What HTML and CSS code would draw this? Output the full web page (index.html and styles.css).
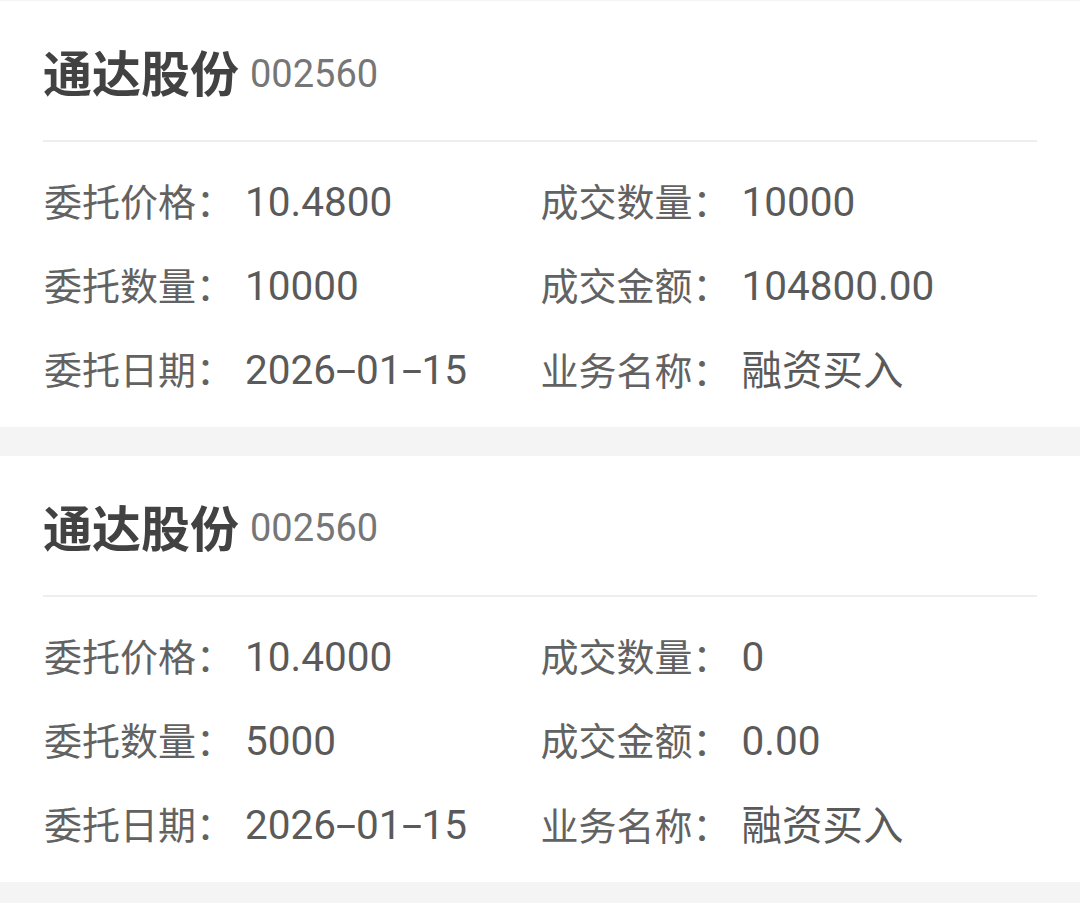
FILE: index.html
```html
<!DOCTYPE html>
<html lang="zh-CN">
<head>
<meta charset="utf-8">
<title>委托列表</title>
<link rel="stylesheet" href="styles.css">
</head>
<body>
<div class="list">
  <section class="card">
    <div class="card-head">
      <span class="name">通达股份</span>
      <span class="code">002560</span>
    </div>
    <div class="divider"></div>
    <div class="grid">
      <div class="item"><span class="label">委托价格：</span><span class="value">10.4800</span></div>
      <div class="item"><span class="label">成交数量：</span><span class="value">10000</span></div>
      <div class="item"><span class="label">委托数量：</span><span class="value">10000</span></div>
      <div class="item"><span class="label">成交金额：</span><span class="value">104800.00</span></div>
      <div class="item"><span class="label">委托日期：</span><span class="value">2026<span class="dash">-</span>01<span class="dash">-</span>15</span></div>
      <div class="item"><span class="label">业务名称：</span><span class="value">融资买入</span></div>
    </div>
  </section>
  <section class="card">
    <div class="card-head">
      <span class="name">通达股份</span>
      <span class="code">002560</span>
    </div>
    <div class="divider"></div>
    <div class="grid">
      <div class="item"><span class="label">委托价格：</span><span class="value">10.4000</span></div>
      <div class="item"><span class="label">成交数量：</span><span class="value">0</span></div>
      <div class="item"><span class="label">委托数量：</span><span class="value">5000</span></div>
      <div class="item"><span class="label">成交金额：</span><span class="value">0.00</span></div>
      <div class="item"><span class="label">委托日期：</span><span class="value">2026<span class="dash">-</span>01<span class="dash">-</span>15</span></div>
      <div class="item"><span class="label">业务名称：</span><span class="value">融资买入</span></div>
    </div>
  </section>
</div>
</body>
</html>
```

FILE: styles.css
```css
html, body {
  margin: 0;
  padding: 0;
}
body {
  background: #f4f4f4;
  font-family: Roboto, "Noto Sans CJK SC", sans-serif;
  color: #5f5f5f;
  padding-top: 1px;
}
.list {
  display: flex;
  flex-direction: column;
  gap: 29px;
}
.card {
  background: #fff;
  padding: 0 43px;
}
.card-head {
  height: 139px;
  display: flex;
  align-items: center;
  gap: 11px;
}
.name {
  font-size: 49px;
  font-weight: 700;
  color: #424242;
  font-family: "Noto Sans CJK SC", sans-serif;
}
.code {
  font-size: 38px;
  color: #767676;
  font-family: Roboto, sans-serif;
  padding-top: 6px;
}
.divider {
  height: 2px;
  background: #eeeeee;
}
.grid {
  display: grid;
  grid-template-columns: 1fr 1fr;
  grid-auto-rows: 83.67px;
  padding: 16px 0 18px 1px;
}
.item {
  display: flex;
  align-items: baseline;
  align-content: center;
  flex-wrap: wrap;
  white-space: nowrap;
}
.label {
  font-family: "Noto Sans CJK SC", sans-serif;
  font-size: 38px;
  color: #626262;
  margin-right: 11px;
}
.value {
  font-size: 40.5px;
  color: #5a5a5a;
  font-family: Roboto, "Noto Sans CJK SC", sans-serif;
}
.dash {
  display: inline-block;
  width: 20px;
  text-align: center;
  transform: scaleX(1.8);
}
```
